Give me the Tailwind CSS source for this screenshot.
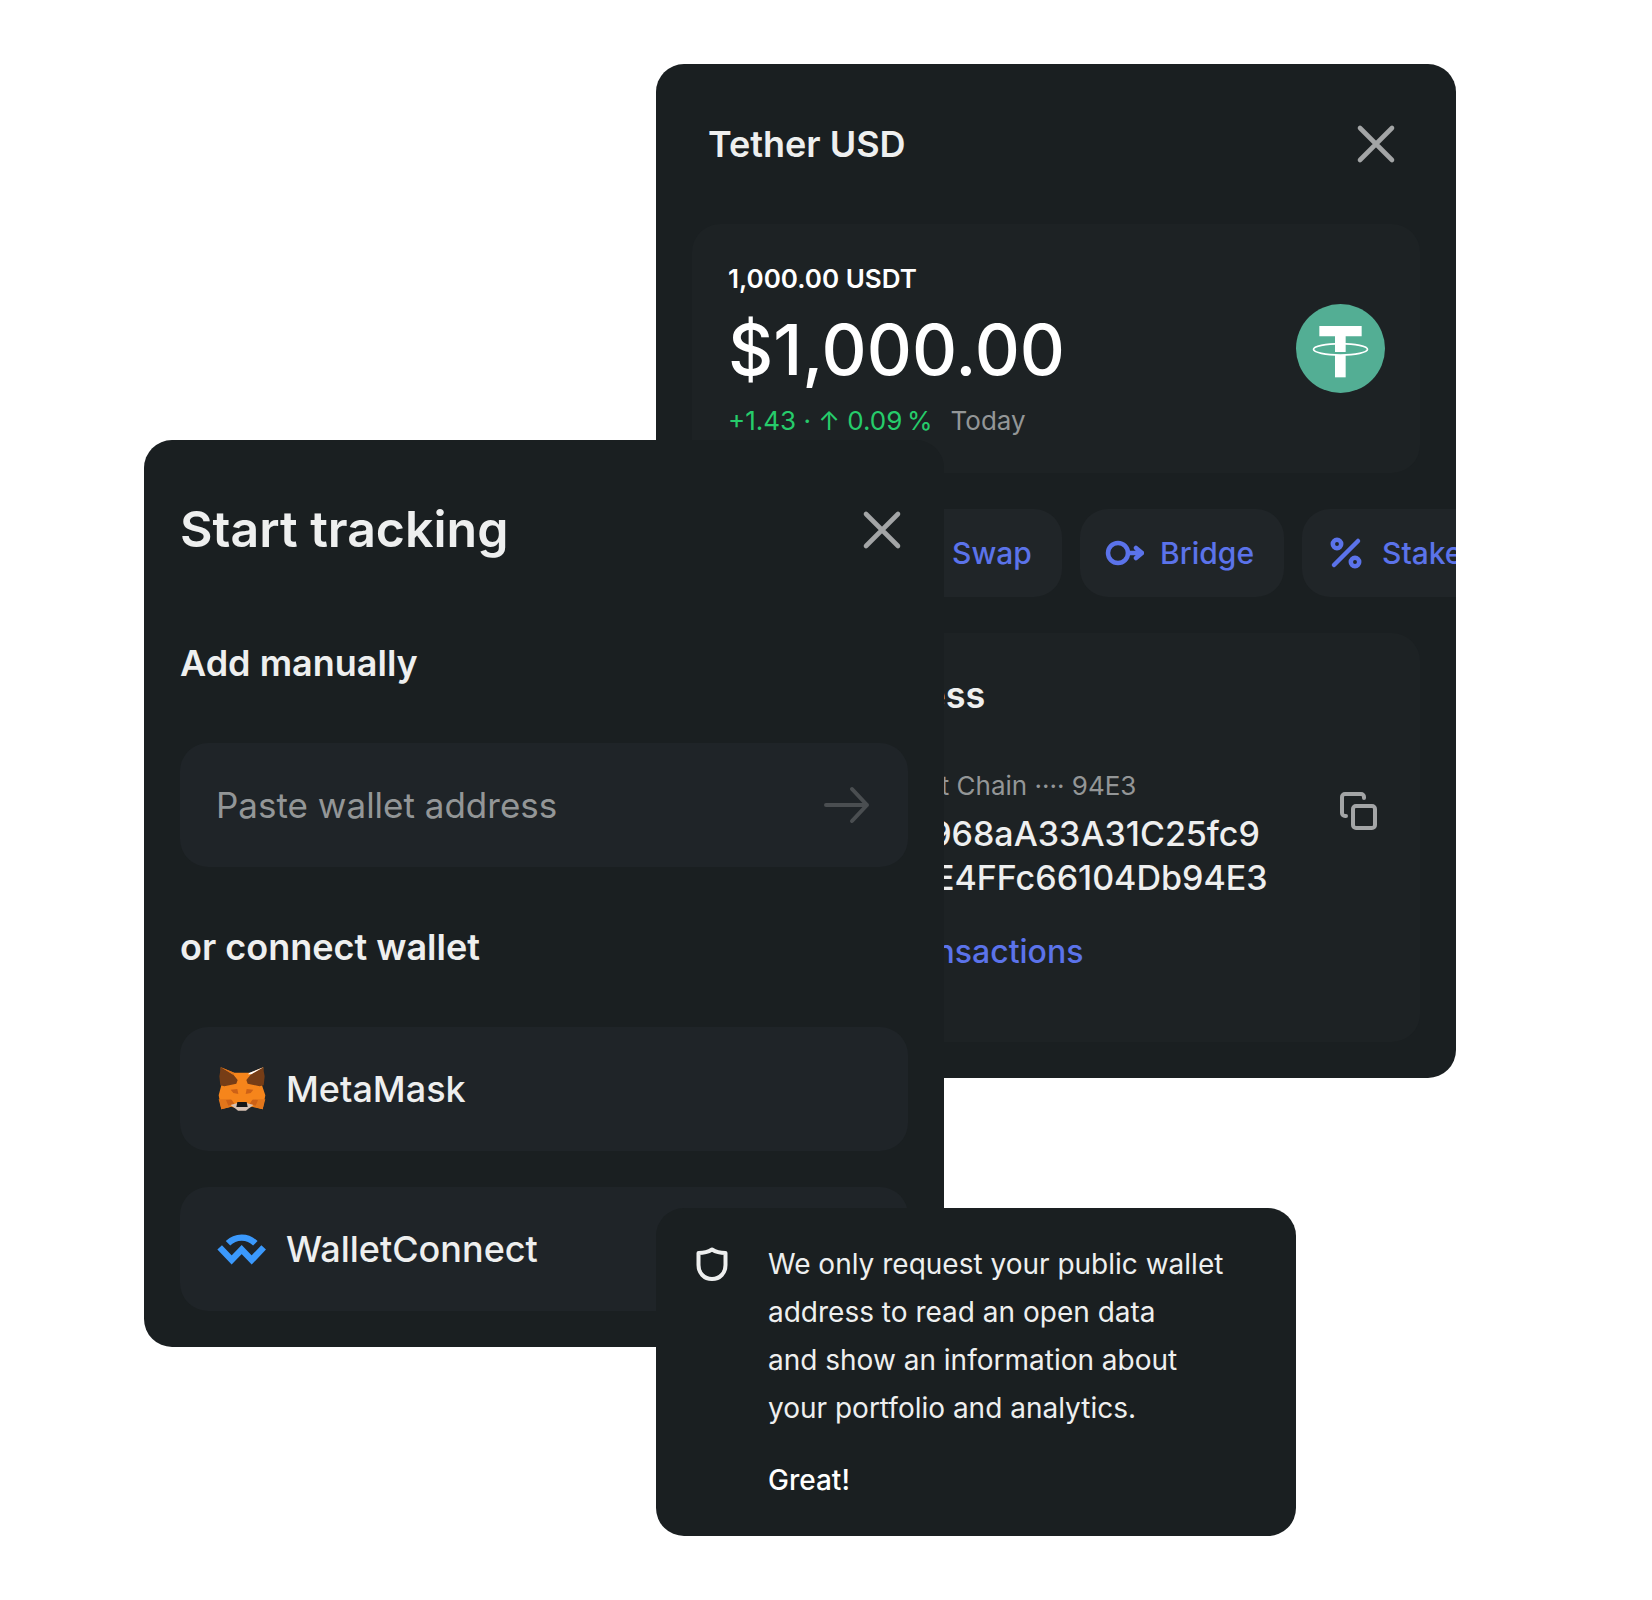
<!DOCTYPE html>
<html lang="en">
<head>
    <meta charset="UTF-8">
    <meta name="viewport" content="width=device-width, initial-scale=1.0">
    <title>Start tracking</title>
    <script src="https://cdn.jsdelivr.net/npm/@tailwindcss/browser@4"></script>
</head>
<body class="bg-white font-['Inter',sans-serif] text-[#eeefef]">
    <main class="relative min-h-screen overflow-hidden">

        <!-- Token details -->
        <section class="absolute left-[656px] top-16 w-[800px] overflow-hidden rounded-[28px] bg-[#1a1f21] px-9 pb-9">
            <header class="flex h-40 items-center justify-between pl-4 pr-5">
                <h2 class="text-[36px] font-semibold">Tether USD</h2>
                <button type="button" aria-label="Close" class="text-[#a3a5a6]">
                    <svg class="size-12" viewBox="0 0 48 48" fill="none" stroke="currentColor" stroke-width="4.600" stroke-linecap="round"><path d="M8 8l32 32M40 8L8 40"/></svg>
                </button>
            </header>

            <div class="flex items-start justify-between rounded-[28px] bg-[#1d2224] pb-[33px] pl-9 pr-[35px] pt-9">
                <div>
                    <p class="text-[26px] leading-[38px] font-semibold text-white">1,000.00 USDT</p>
                    <p class="text-[70px] leading-[104px] font-medium text-white">$1,000.00</p>
                    <p class="flex gap-[18px] text-[26px] leading-[38px] text-[#26cc6b]">
                        <span>+1.43 · ↑ 0.09&#8201;%</span>
                        <span class="text-[#939697]">Today</span>
                    </p>
                </div>
                <svg class="mt-11 size-[89px]" viewBox="0 0 267 267">
                    <circle cx="133.5" cy="133.5" r="133.5" fill="#53ae94"/>
                    <ellipse cx="133.5" cy="136" rx="81" ry="17" fill="none" stroke="#fff" stroke-width="5"/>
                    <path d="M70 66h127v31h-48v47h-32V97H70z" fill="#fff"/>
                    <path d="M117 153h32v67h-32z" fill="#fff"/>
                </svg>
            </div>

            <div class="mt-9 flex gap-[18px] whitespace-nowrap text-[30px] font-medium text-[#5b73ea]">
                <button type="button" class="flex h-[88px] w-[162px] shrink-0 items-center gap-4 rounded-[28px] bg-[#202528] pl-6">
                    <svg class="size-10" viewBox="0 0 40 40" fill="none" stroke="currentColor" stroke-width="4" stroke-linecap="round"><path d="M20 8v24M8 20h24"/></svg>
                    Buy
                </button>
                <button type="button" class="flex h-[88px] w-[190px] shrink-0 items-center gap-4 rounded-[28px] bg-[#202528] pl-6">
                    <svg class="size-10" viewBox="0 0 40 40" fill="none" stroke="currentColor" stroke-width="4" stroke-linecap="round" stroke-linejoin="round"><path d="M6 14h28l-7-7M34 26H6l7 7"/></svg>
                    Swap
                </button>
                <button type="button" class="flex h-[88px] w-[204px] shrink-0 items-center gap-4 rounded-[28px] bg-[#202528] pl-6">
                    <svg class="size-10" viewBox="0 0 40 40" fill="none" stroke="currentColor" stroke-width="4.500" stroke-linecap="round" stroke-linejoin="round"><circle cx="14" cy="20" r="10"/><path d="M24 20h13M32 15l6 5-6 5"/></svg>
                    Bridge
                </button>
                <button type="button" class="flex h-[88px] w-[190px] shrink-0 items-center gap-4 rounded-[28px] bg-[#202528] pl-6">
                    <svg class="size-10" viewBox="0 0 40 40" fill="none" stroke="currentColor" stroke-width="4.500" stroke-linecap="round"><circle cx="11" cy="11" r="4.200"/><circle cx="29" cy="29" r="4.200"/><path d="M32 8L8 32"/></svg>
                    Stake
                </button>
            </div>

            <div class="mt-9 rounded-[28px] bg-[#1d2224] pb-[66px] pl-9 pr-[34px] pt-9">
                <h3 class="text-[36px] leading-[52px] font-semibold">Wallet address</h3>
                <div class="mt-[45px] flex items-start justify-between pr-1">
                    <div class="whitespace-nowrap">
                        <p class="text-[26px] leading-[40px] text-[#939697]">On Binance Smart Chain ···· 94E3</p>
                        <p class="mt-1.5 text-[34px] leading-[44px] font-medium">0x7bDE1d5c968aA33A31C25fc9<br>8DCd02Ff1AE4FFc66104Db94E3</p>
                    </div>
                    <button type="button" aria-label="Copy address" class="mt-5 text-[#a3a5a6]">
                        <svg class="size-12" viewBox="0 0 48 48" fill="none" stroke="currentColor" stroke-width="4" stroke-linecap="round" stroke-linejoin="round"><rect x="19" y="20" width="22" height="22" rx="3"/><path d="M12 30h-1a3 3 0 0 1-3-3V11a3 3 0 0 1 3-3h16a3 3 0 0 1 3 3v1"/></svg>
                    </button>
                </div>
                <a href="#" class="mt-7 block text-[32px] leading-[48px] font-medium text-[#5b73ea]">Explore all transactions</a>
            </div>
        </section>

        <!-- Add wallet -->
        <section class="absolute left-36 top-[440px] w-[800px] rounded-[28px] bg-[#1a1f21] px-9 pb-9 pt-9">
            <header class="flex h-[107px] items-center justify-between pr-0.5">
                <h1 class="text-[50px] font-semibold">Start tracking</h1>
                <button type="button" aria-label="Close" class="text-[#a3a5a6]">
                    <svg class="size-12" viewBox="0 0 48 48" fill="none" stroke="currentColor" stroke-width="4.600" stroke-linecap="round"><path d="M8 8l32 32M40 8L8 40"/></svg>
                </button>
            </header>

            <label for="address" class="flex h-40 items-center text-[36px] font-semibold">Add manually</label>
            <div class="flex h-[124px] items-center rounded-[28px] bg-[#1f2428] px-9">
                <input id="address" type="text" placeholder="Paste wallet address" class="min-w-0 grow bg-transparent text-[35px] outline-none placeholder:text-[#939697]">
                <button type="button" aria-label="Continue" class="text-[#4a4e51]">
                    <svg class="h-10 w-12" viewBox="0 0 48 40" fill="none" stroke="currentColor" stroke-width="4" stroke-linecap="round" stroke-linejoin="round"><path d="M2 20h41M28 4l15 16-15 16"/></svg>
                </button>
            </div>

            <h2 class="flex h-40 items-center text-[36px] font-semibold">or connect wallet</h2>
            <div class="flex flex-col gap-9 text-[36px] font-medium">
                <button type="button" class="flex h-[124px] items-center gap-[18px] rounded-[28px] bg-[#1f2428] px-9">
                    <svg class="size-[52px]" viewBox="48 41 156 156">
                        <path fill="#f6851b" d="M62 54l40 16h48l40-16-4 54 10 30-8 42-32-8-12 4h-38l-12-4-30 8-8-42 8-30z"/>
                        <path fill="#763d16" d="M63 54l-5 27 3 27 12 3 36-8 4-11-14-17zM189 54l5 27-3 27-12 3-36-8-4-11 14-17z"/>
                        <path fill="#e2761b" d="M63 54l36 22 4-6zM56 150h37l-1 22-28 8zM196 150h-37l1 22 28 8z"/>
                        <path fill="#fff" d="M190 54l-41 16-5 5 10 0z"/>
                        <path fill="#cd6116" d="M92 121l20-2 3 15-15-3zM160 121l-20-2-3 15 15-3zM78 152l17-1 8 12-18 6zM174 152l-17-1-8 12 18 6z"/>
                        <path fill="#d7c1b3" d="M92 167l18-5h32l18 5-16 12-6 5h-24l-6-5z"/>
                        <path fill="#161616" d="M112 158h28l3 15h-34z"/>
                    </svg>
                    MetaMask
                </button>
                <button type="button" class="flex h-[124px] items-center gap-[18px] rounded-[28px] bg-[#1f2428] px-9">
                    <svg class="size-[52px]" viewBox="48 9 156 156" fill="none" stroke="#3b99fc" stroke-width="19"><path d="M59 82l36 38 30-31 30 31 36-38M84 70a58 58 0 0 1 82 0"/></svg>
                    WalletConnect
                </button>
            </div>
        </section>

        <!-- Privacy note -->
        <aside class="absolute left-[656px] top-[1208px] flex w-[640px] items-start gap-8 rounded-[28px] bg-[#1a1f21] p-8">
            <svg class="size-12 shrink-0" viewBox="0 0 48 48" fill="none" stroke="currentColor" stroke-width="4" stroke-linejoin="round"><path d="M24 9.500C20 12 15.500 13 10.500 13v12C10.500 33 16 39 24 39s13.500-6 13.500-14V13C32.500 13 28 12 24 9.500z"/></svg>
            <div class="text-[28px] leading-[48px]">
                <p>We only request your public wallet<br>address to read an open data<br>and show an information about<br>your portfolio and analytics.</p>
                <button type="button" class="mt-6 block font-medium text-white">Great!</button>
            </div>
        </aside>
    </main>
</body>
</html>
